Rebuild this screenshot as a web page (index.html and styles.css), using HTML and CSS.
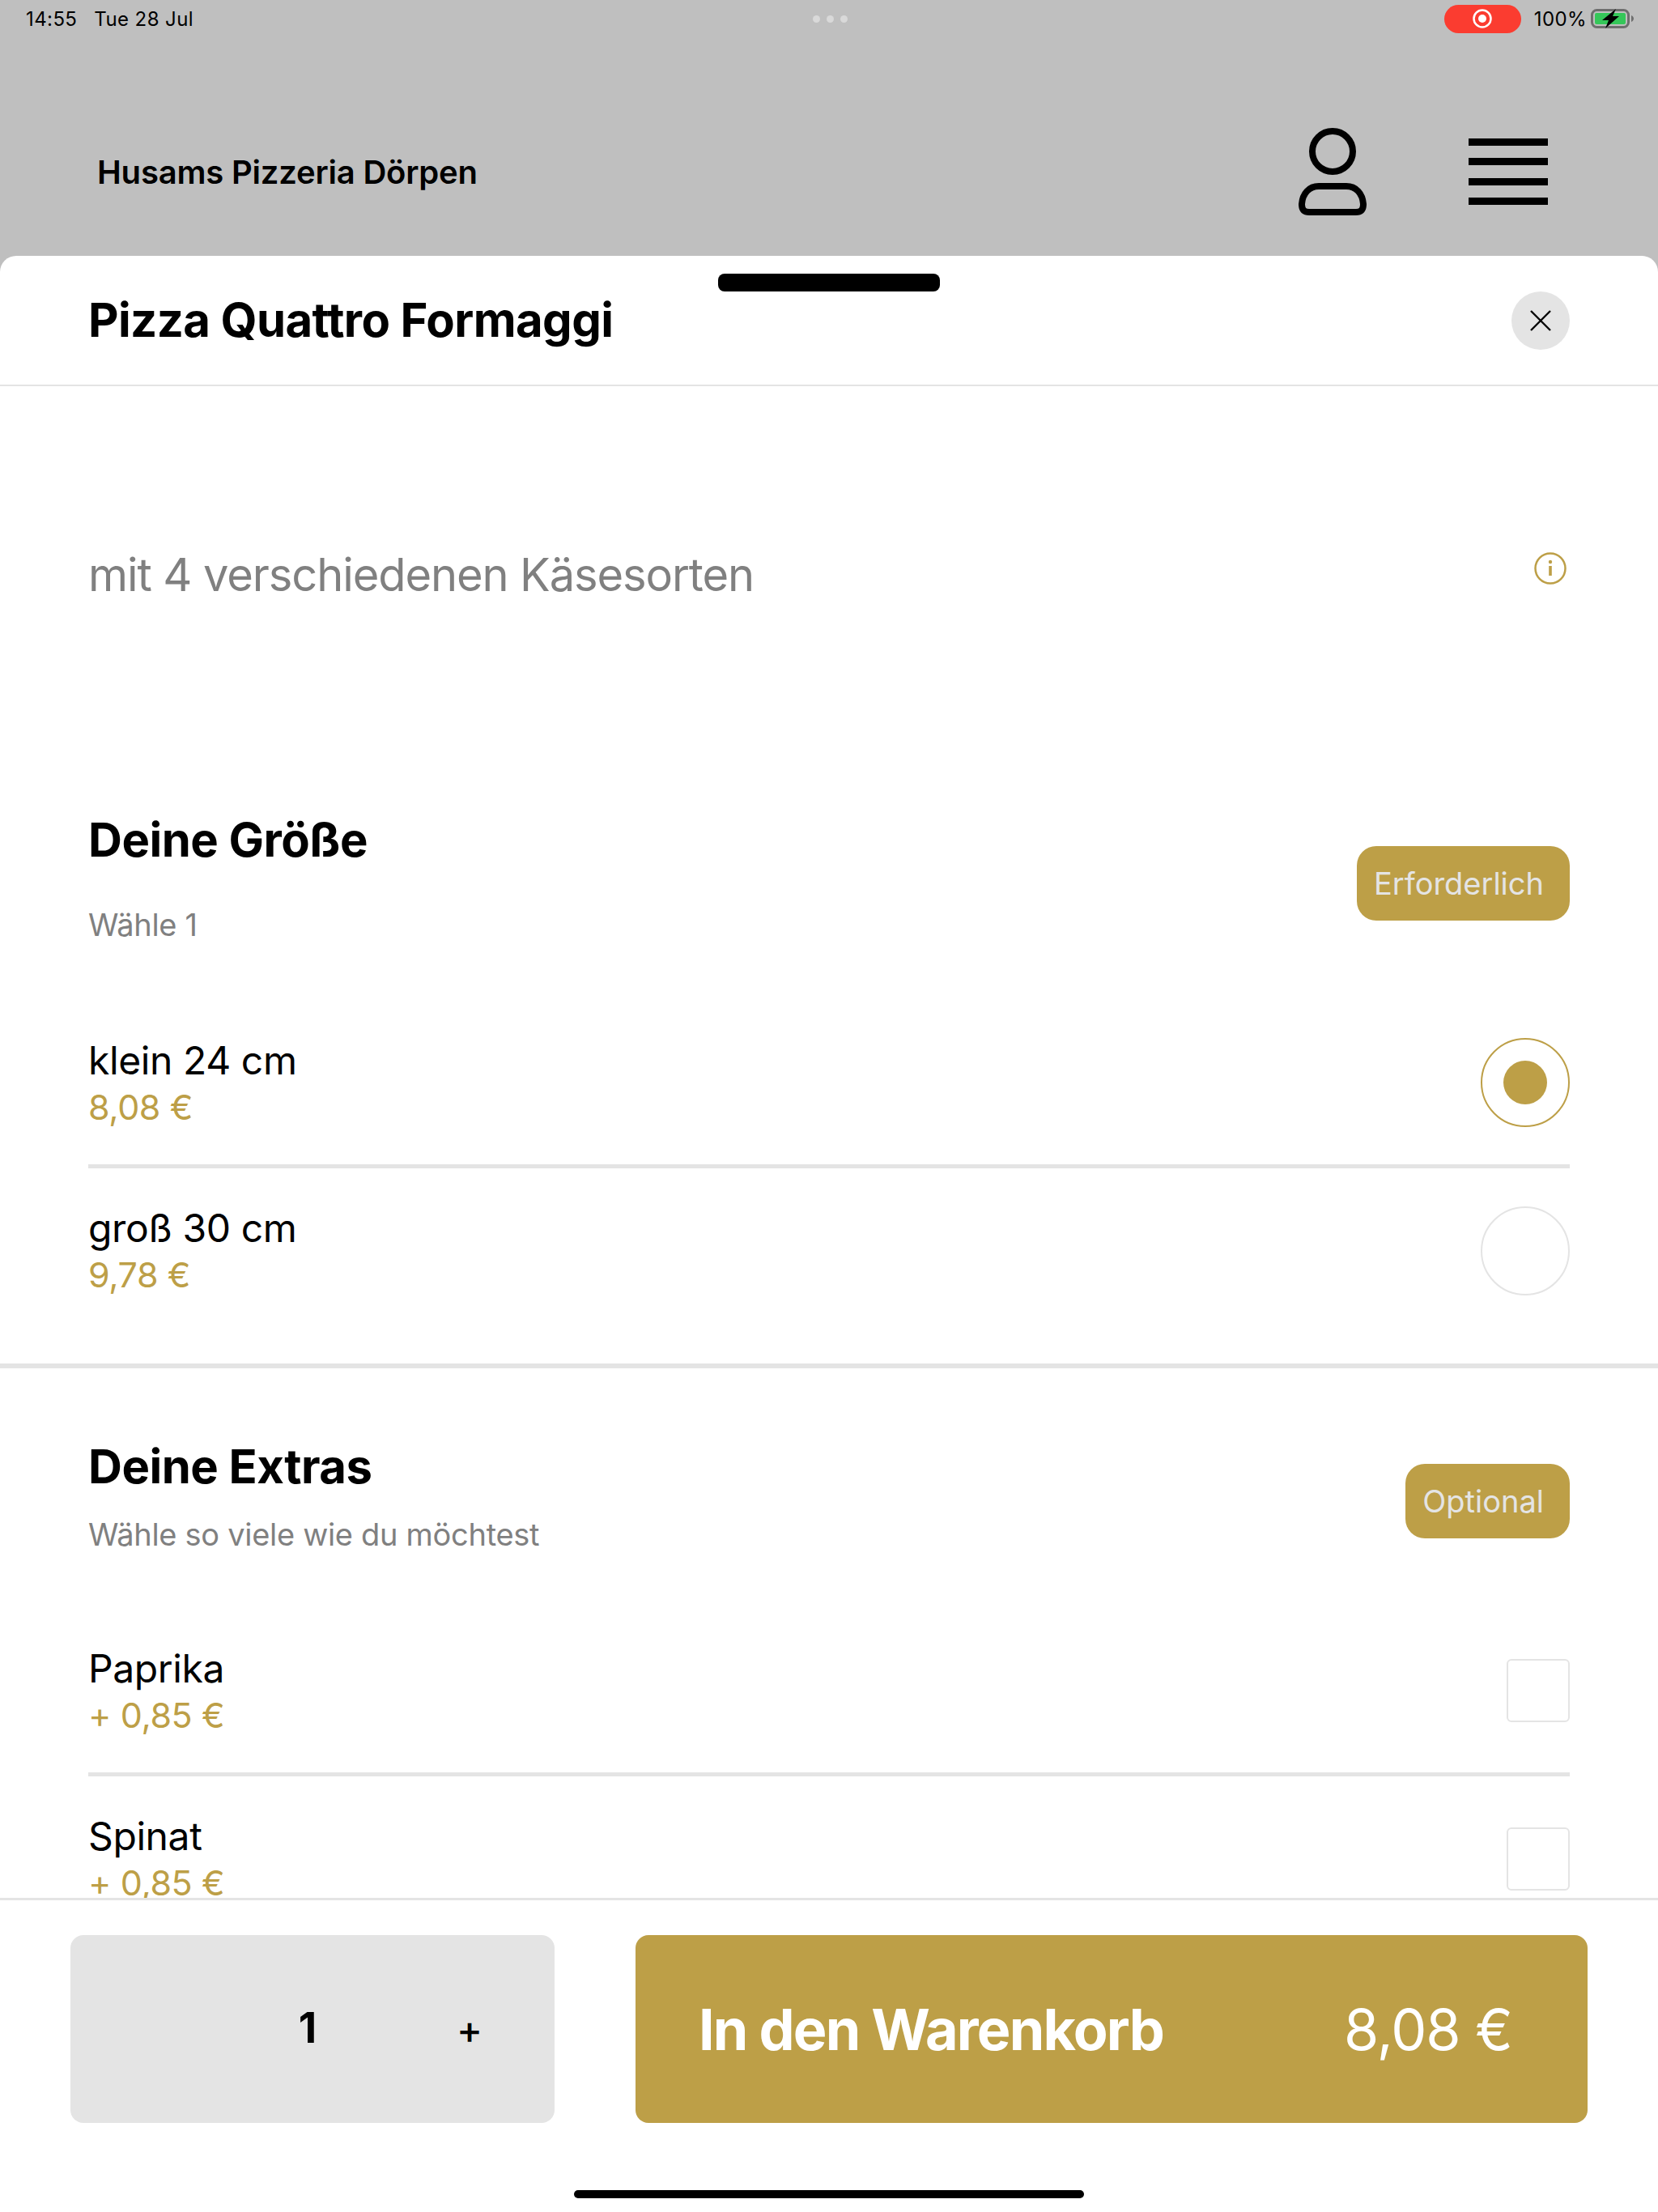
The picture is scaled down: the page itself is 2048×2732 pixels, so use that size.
FILE: index.html
```html
<!DOCTYPE html>
<html lang="de">
<head>
    <meta charset="UTF-8">
    <meta name="viewport" content="width=device-width, initial-scale=1.0">
    <title>Husams Pizzeria Dörpen</title>
    <link rel="stylesheet" href="styles.css">
</head>
<body>
    <div class="top">
        <!-- Statusleiste -->
        <div class="status">
            <div class="status-left"><span>14:55</span><span>Tue 28 Jul</span></div>
            <div class="status-dots"><i></i><i></i><i></i></div>
            <div class="status-right">
                <div class="rec">
                    <svg width="26" height="26" viewBox="0 0 26 26"><circle cx="13" cy="13" r="10.5" fill="none" stroke="#fff" stroke-width="2.5"/><circle cx="13" cy="13" r="5" fill="#fff"/></svg>
                </div>
                <span class="percent">100%</span>
                <svg width="54" height="24" viewBox="0 0 54 24"><rect x="1.5" y="1.5" width="45" height="21" rx="6" fill="none" stroke="#6e6e6e" stroke-width="3"/><rect x="5" y="5" width="38" height="14" rx="2" fill="#35c759"/><path d="M50 8c2 1 3 2.5 3 4s-1 3-3 4z" fill="#6e6e6e"/><path d="M31 0L14 14h8l-4 10 17-15h-8z" fill="#000"/></svg>
            </div>
        </div>
        <!-- Kopfzeile -->
        <header class="site-head">
            <div class="site-name">Husams Pizzeria Dörpen</div>
            <svg class="user-icon" width="84" height="108" viewBox="0 0 84 108"><circle cx="42" cy="29" r="25" fill="none" stroke="#000" stroke-width="8"/><path d="M25 72h34c12 0 20 9 21 22 0 7-3 10-9 10H13c-6 0-9-3-9-10 1-13 9-22 21-22z" fill="none" stroke="#000" stroke-width="8"/></svg>
            <div class="menu-icon"><i></i><i></i><i></i><i></i></div>
        </header>
    </div>

    <div class="sheet">
        <div class="handle"></div>
        <div class="sheet-head">
            <h1>Pizza Quattro Formaggi</h1>
            <div class="close">
                <svg width="26" height="26" viewBox="0 0 26 26"><path d="M1 1l24 24M25 1L1 25" stroke="#000" stroke-width="2.4" fill="none"/></svg>
            </div>
        </div>

        <div class="scroll">
            <div class="desc">
                <p>mit 4 verschiedenen Käsesorten</p>
                <svg width="40" height="40" viewBox="0 0 40 40"><circle cx="20" cy="20" r="18.5" fill="none" stroke="#bd9f47" stroke-width="2.5"/><circle cx="20" cy="12" r="2.2" fill="#bd9f47"/><rect x="18.2" y="17" width="3.6" height="12" fill="#bd9f47"/></svg>
            </div>

            <!-- Größe -->
            <section class="group group-size">
                <div class="group-head">
                    <div>
                        <h2>Deine Größe</h2>
                        <p class="hint hint-wide">Wähle 1</p>
                    </div>
                    <span class="badge">Erforderlich</span>
                </div>
                <div class="option">
                    <div><div class="opt-name">klein 24 cm</div><div class="opt-price">8,08 €</div></div>
                    <div class="radio checked"><i></i></div>
                </div>
                <div class="option last">
                    <div><div class="opt-name">groß 30 cm</div><div class="opt-price">9,78 €</div></div>
                    <div class="radio"></div>
                </div>
            </section>

            <!-- Extras -->
            <section class="group">
                <div class="group-head">
                    <div>
                        <h2>Deine Extras</h2>
                        <p class="hint">Wähle so viele wie du möchtest</p>
                    </div>
                    <span class="badge">Optional</span>
                </div>
                <div class="option">
                    <div><div class="opt-name">Paprika</div><div class="opt-price">+ 0,85 €</div></div>
                    <div class="check"></div>
                </div>
                <div class="option last">
                    <div><div class="opt-name">Spinat</div><div class="opt-price">+ 0,85 €</div></div>
                    <div class="check"></div>
                </div>
            </section>
        </div>

        <footer class="foot">
            <div class="foot-row">
                <div class="qty"><span></span><span class="qty-num">1</span><span class="qty-plus">+</span></div>
                <div class="add"><span class="add-label">In den Warenkorb</span><span class="add-price">8,08 €</span></div>
            </div>
            <div class="home-bar"></div>
        </footer>
    </div>
</body>
</html>
```

FILE: styles.css
```css
* {
    box-sizing: border-box;
}
body {
    font-family: Inter, "Liberation Sans", sans-serif;
    margin: 0;
    width: 2048px;
    height: 2732px;
    overflow: hidden;
    display: flex;
    flex-direction: column;
    background-color: #bfbfbf;
    color: #000;
}
h1, h2, p {
    margin: 0;
}

/* oben */
.top {
    height: 316px;
    background-color: #bfbfbf;
}
.status {
    height: 46px;
    padding: 0 29px 0 32px;
    display: flex;
    align-items: center;
    justify-content: space-between;
    font-size: 24px;
    letter-spacing: 0.4px;
    position: relative;
}
.status-left {
    display: flex;
    gap: 21px;
}
.status-dots {
    position: absolute;
    left: 1004px;
    top: 19px;
    display: flex;
    gap: 8px;
}
.status-dots i {
    width: 9px;
    height: 9px;
    border-radius: 50%;
    background-color: #d9d9d9;
}
.status-right {
    display: flex;
    align-items: center;
}
.rec {
    width: 95px;
    height: 35px;
    border-radius: 18px;
    background-color: #fb3c30;
    display: flex;
    align-items: center;
    justify-content: center;
    margin-right: 16px;
}
.percent {
    margin-right: 5px;
}
.site-head {
    height: 270px;
    padding: 62px 136px 0 120px;
    display: flex;
    align-items: center;
}
.site-name {
    flex: 1;
    font-size: 40px;
    font-weight: 600;
    letter-spacing: -0.2px;
}
.user-icon {
    margin-right: 126px;
}
.menu-icon {
    display: flex;
    flex-direction: column;
    gap: 15.5px;
}
.menu-icon i {
    display: block;
    width: 98px;
    height: 9px;
    background-color: #000;
}

/* Sheet */
.sheet {
    flex: 1;
    min-height: 0;
    background-color: #fff;
    border-radius: 20px 20px 0 0;
    display: flex;
    flex-direction: column;
    position: relative;
}
.handle {
    position: absolute;
    left: 887px;
    top: 22px;
    width: 274px;
    height: 22px;
    border-radius: 8px;
    background-color: #000;
}
.sheet-head {
    height: 161px;
    flex-shrink: 0;
    padding: 0 109px;
    border-bottom: 2px solid #e4e4e4;
    display: flex;
    align-items: center;
    justify-content: space-between;
}
h1 {
    font-size: 58px;
    font-weight: 700;
    letter-spacing: -0.6px;
    margin-top: -2px;
}
.close {
    width: 72px;
    height: 72px;
    border-radius: 50%;
    background-color: #e4e4e4;
    display: flex;
    align-items: center;
    justify-content: center;
}
.scroll {
    flex: 1;
    min-height: 0;
    overflow: hidden;
}
.desc {
    padding: 200px 113px 258px 109px;
    display: flex;
    justify-content: space-between;
    align-items: flex-start;
}
.desc p {
    font-size: 56px;
    line-height: 66px;
    letter-spacing: -1.1px;
    color: #808080;
}
.desc svg {
    margin-top: 5px;
}
.group {
    padding: 0 109px;
}
.group-size {
    border-bottom: 6px solid #e4e4e4;
    padding-bottom: 38px;
    margin-bottom: 85px;
}
.group-head {
    display: flex;
    align-items: center;
    justify-content: space-between;
    margin-bottom: 68px;
}
.group-size .group-head {
    margin-bottom: 70px;
}
h2 {
    font-size: 58px;
    line-height: 72px;
    font-weight: 700;
    letter-spacing: -0.5px;
}
.hint {
    font-size: 38px;
    line-height: 48px;
    letter-spacing: -0.3px;
    color: #808080;
    margin-top: 24px;
}
.hint-wide {
    margin-top: 45px;
}
.badge {
    height: 92px;
    margin-top: 14px;
    padding: 0 32px 0 21px;
    border-radius: 24px;
    background-color: #bd9f47;
    color: #e4e4e4;
    font-size: 38px;
    display: flex;
    align-items: center;
}
.option {
    height: 207px;
    border-bottom: 5px solid #e4e4e4;
    display: flex;
    align-items: center;
    justify-content: space-between;
}
.option.last {
    border-bottom: none;
    height: 203px;
}
.opt-name {
    font-size: 48px;
    line-height: 58px;
    letter-spacing: -0.4px;
}
.opt-price {
    font-size: 43px;
    line-height: 54px;
    letter-spacing: -0.4px;
    margin-top: 1px;
    color: #bd9f47;
}
.radio {
    width: 110px;
    height: 110px;
    border-radius: 50%;
    border: 2px solid #e4e4e4;
    display: flex;
    align-items: center;
    justify-content: center;
}
.radio.checked {
    border-color: #bd9f47;
}
.radio i {
    width: 54px;
    height: 54px;
    border-radius: 50%;
    background-color: #bd9f47;
}
.check {
    width: 78px;
    height: 78px;
    border-radius: 6px;
    border: 2px solid #e4e4e4;
}

/* unten */
.foot {
    flex-shrink: 0;
    height: 388px;
    border-top: 3px solid #e4e4e4;
    padding: 43px 87px 0;
    background-color: #fff;
}
.foot-row {
    display: flex;
    gap: 100px;
    height: 232px;
}
.qty {
    width: 598px;
    padding-right: 10px;
    border-radius: 16px;
    background-color: #e4e4e4;
    display: grid;
    grid-template-columns: repeat(3, 1fr);
    align-items: center;
    justify-items: center;
}
.qty-num {
    font-size: 52px;
    font-weight: 700;
    margin: -4px 2px 0 0;
}
.qty-plus {
    font-size: 48px;
    font-weight: 500;
    margin-left: 6px;
}
.add {
    flex: 1;
    border-radius: 16px;
    background-color: #bd9f47;
    color: #fff;
    padding: 0 93px 0 78px;
    display: flex;
    align-items: center;
    justify-content: space-between;
    font-size: 70px;
}
.add-label {
    font-weight: 700;
    letter-spacing: -1.8px;
}
.add-price {
    letter-spacing: -1px;
}
.home-bar {
    width: 630px;
    height: 10px;
    margin: 83px auto 0;
    border-radius: 5px;
    background-color: #000;
}
```
